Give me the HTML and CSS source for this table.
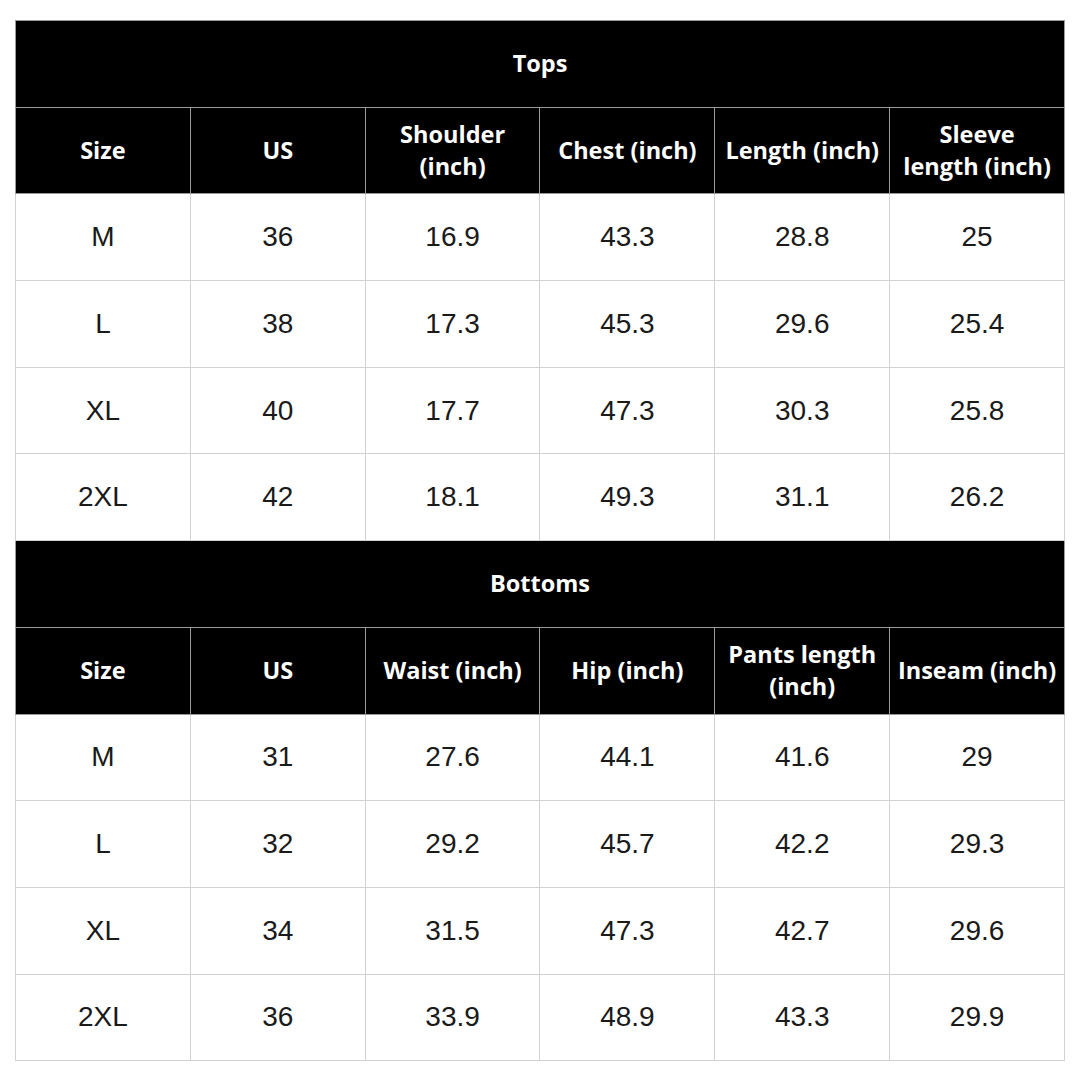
FILE: index.html
```html
<!DOCTYPE html>
<html>
<head>
<meta charset="utf-8">
<link rel="stylesheet" href="styles.css">
</head>
<body>
<table class="chart">
  <tr class="title"><th colspan="6">Tops</th></tr>
  <tr class="head"><th>Size</th><th>US</th><th>Shoulder<br>(inch)</th><th>Chest (inch)</th><th>Length (inch)</th><th>Sleeve<br>length (inch)</th></tr>
  <tr><td>M</td><td>36</td><td>16.9</td><td>43.3</td><td>28.8</td><td>25</td></tr>
  <tr><td>L</td><td>38</td><td>17.3</td><td>45.3</td><td>29.6</td><td>25.4</td></tr>
  <tr><td>XL</td><td>40</td><td>17.7</td><td>47.3</td><td>30.3</td><td>25.8</td></tr>
  <tr><td>2XL</td><td>42</td><td>18.1</td><td>49.3</td><td>31.1</td><td>26.2</td></tr>
  <tr class="title"><th colspan="6">Bottoms</th></tr>
  <tr class="head"><th>Size</th><th>US</th><th>Waist (inch)</th><th>Hip (inch)</th><th>Pants length<br>(inch)</th><th>Inseam (inch)</th></tr>
  <tr><td>M</td><td>31</td><td>27.6</td><td>44.1</td><td>41.6</td><td>29</td></tr>
  <tr><td>L</td><td>32</td><td>29.2</td><td>45.7</td><td>42.2</td><td>29.3</td></tr>
  <tr><td>XL</td><td>34</td><td>31.5</td><td>47.3</td><td>42.7</td><td>29.6</td></tr>
  <tr><td>2XL</td><td>36</td><td>33.9</td><td>48.9</td><td>43.3</td><td>29.9</td></tr>
</table>
</body>
</html>
```
FILE: styles.css
```css
html, body {
  margin: 0;
  padding: 0;
  background: #ffffff;
}
.chart {
  margin: 20px 0 0 15px;
  width: 1050px;
  border-collapse: collapse;
  table-layout: fixed;
}
.chart tr {
  height: 86.7px;
}
.chart th, .chart td {
  border: 1px solid #d2d2d2;
  text-align: center;
  vertical-align: middle;
  padding: 0;
}
.chart th {
  background: #000000;
  color: #ffffff;
  font-family: "Open Sans", "Liberation Sans", sans-serif;
  font-weight: 700;
  font-size: 23.5px;
  line-height: 32px;
  padding-bottom: 2px;
  border-color: #9a9a9a;
}
.chart td {
  color: #1a1a1a;
  font-family: "Liberation Sans", Arial, sans-serif;
  font-size: 28px;
  font-weight: 400;
}
```
